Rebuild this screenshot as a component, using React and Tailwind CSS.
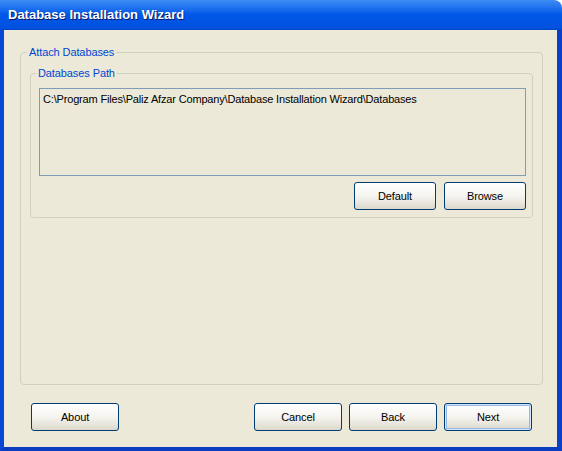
const FONT = "font-['Tahoma','Liberation_Sans',sans-serif]";

function XpButton({ label, isDefault }) {
  return (
    <button
      className={`h-[28px] rounded-[3px] border border-[#003c74] bg-gradient-to-b from-white via-[#f5f4ef] to-[#dcd8cc] text-[11px] tracking-[-0.1px] text-black ${
        isDefault ? "shadow-[inset_0_0_0_1px_#cee7ff,inset_0_0_0_2px_#98b8ea]" : ""
      }`}
    >
      {label}
    </button>
  );
}

export default function App() {
  return (
    <div className={`w-[562px] h-[451px] flex flex-col bg-white ${FONT}`}>
      {/* Title bar */}
      <div className="h-[30px] shrink-0 flex items-center pl-[8px] rounded-tr-[8px] bg-gradient-to-b from-[#3d8cf5] via-[#0058e8] to-[#0150de] border-b border-[#0046c8]">
        <span className="text-white font-bold text-[13px] font-['Liberation_Sans',sans-serif] [text-shadow:1px_1px_#0a1864] pt-[1px]">
          Database Installation Wizard
        </span>
      </div>

      {/* Client area */}
      <div className="flex-1 flex flex-col border-l-[4px] border-r-[5px] border-b-[4px] border-l-[#0847d6] border-r-[#0a3fc8] border-b-[#0a3cc0] bg-[#ece9d8]">
        <div className="flex-1 flex flex-col pl-[16px] pr-[14px] pt-[15px]">
          <fieldset className="flex-1 border border-[#d0d0bf] rounded-[4px] px-[9px] pb-[8px]">
            <legend className="-ml-[3px] px-[2px] text-[11px] tracking-[-0.1px] text-[#0046d5] leading-[14px]">
              Attach Databases
            </legend>
            <fieldset className="border border-[#d0d0bf] rounded-[4px] pl-[8px] pr-[6px] pt-[8px] pb-[7px] mt-[7px]">
              <legend className="-ml-[3px] px-[2px] text-[11px] tracking-[-0.1px] text-[#0046d5] leading-[14px]">
                Databases Path
              </legend>
              <div className="h-[88px] border border-[#7f9db9] bg-[#ece9d8] px-[3px] pt-[3px] text-[11px] tracking-[-0.17px] text-black leading-[14px]">
                C:\Program Files\Paliz Afzar Company\Database Installation Wizard\Databases
              </div>
              <div className="flex justify-end gap-[8px] mt-[6px]">
                <div className="w-[82px] flex flex-col">
                  <XpButton label="Default" />
                </div>
                <div className="w-[82px] flex flex-col">
                  <XpButton label="Browse" />
                </div>
              </div>
            </fieldset>
          </fieldset>
        </div>

        <div className="flex items-center pl-[27px] pr-[25px] pt-[18px] pb-[16px]">
          <div className="w-[88px] flex flex-col">
            <XpButton label="About" />
          </div>
          <div className="flex-1" />
          <div className="flex gap-[7px]">
            <div className="w-[88px] flex flex-col">
              <XpButton label="Cancel" />
            </div>
            <div className="w-[88px] flex flex-col">
              <XpButton label="Back" />
            </div>
            <div className="w-[88px] flex flex-col">
              <XpButton label="Next" isDefault />
            </div>
          </div>
        </div>
      </div>
    </div>
  );
}
